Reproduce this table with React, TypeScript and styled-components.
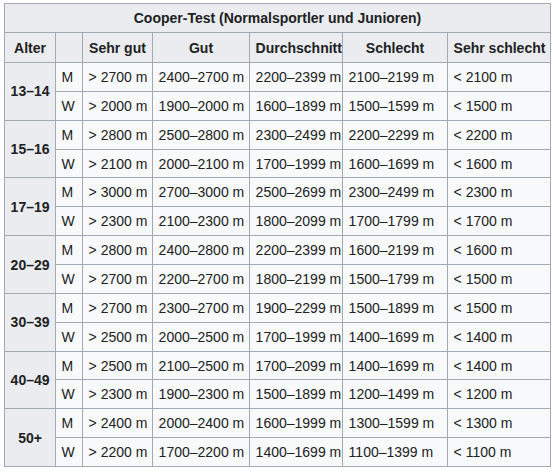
import styled, { createGlobalStyle } from 'styled-components'

type Group = {
	age: string
	rows: { sex: string; values: string[] }[]
}

const HEADERS = ['Sehr gut', 'Gut', 'Durchschnitt', 'Schlecht', 'Sehr schlecht']
const COL_WIDTHS = [51, 27, 70, 97, 93, 105, 103]

const GROUPS: Group[] = [
	{
		age: '13–14',
		rows: [
			{ sex: 'M', values: ['> 2700 m', '2400–2700 m', '2200–2399 m', '2100–2199 m', '< 2100 m'] },
			{ sex: 'W', values: ['> 2000 m', '1900–2000 m', '1600–1899 m', '1500–1599 m', '< 1500 m'] },
		],
	},
	{
		age: '15–16',
		rows: [
			{ sex: 'M', values: ['> 2800 m', '2500–2800 m', '2300–2499 m', '2200–2299 m', '< 2200 m'] },
			{ sex: 'W', values: ['> 2100 m', '2000–2100 m', '1700–1999 m', '1600–1699 m', '< 1600 m'] },
		],
	},
	{
		age: '17–19',
		rows: [
			{ sex: 'M', values: ['> 3000 m', '2700–3000 m', '2500–2699 m', '2300–2499 m', '< 2300 m'] },
			{ sex: 'W', values: ['> 2300 m', '2100–2300 m', '1800–2099 m', '1700–1799 m', '< 1700 m'] },
		],
	},
	{
		age: '20–29',
		rows: [
			{ sex: 'M', values: ['> 2800 m', '2400–2800 m', '2200–2399 m', '1600–2199 m', '< 1600 m'] },
			{ sex: 'W', values: ['> 2700 m', '2200–2700 m', '1800–2199 m', '1500–1799 m', '< 1500 m'] },
		],
	},
	{
		age: '30–39',
		rows: [
			{ sex: 'M', values: ['> 2700 m', '2300–2700 m', '1900–2299 m', '1500–1899 m', '< 1500 m'] },
			{ sex: 'W', values: ['> 2500 m', '2000–2500 m', '1700–1999 m', '1400–1699 m', '< 1400 m'] },
		],
	},
	{
		age: '40–49',
		rows: [
			{ sex: 'M', values: ['> 2500 m', '2100–2500 m', '1700–2099 m', '1400–1699 m', '< 1400 m'] },
			{ sex: 'W', values: ['> 2300 m', '1900–2300 m', '1500–1899 m', '1200–1499 m', '< 1200 m'] },
		],
	},
	{
		age: '50+',
		rows: [
			{ sex: 'M', values: ['> 2400 m', '2000–2400 m', '1600–1999 m', '1300–1599 m', '< 1300 m'] },
			{ sex: 'W', values: ['> 2200 m', '1700–2200 m', '1400–1699 m', '1100–1399 m', '< 1100 m'] },
		],
	},
]

const GlobalStyle = createGlobalStyle`
	body {
		margin: 0;
		background: #ffffff;
		font-family: 'Liberation Sans', Arial, sans-serif;
		color: #202122;
	}
`

const App = () => (
	<Page>
		<GlobalStyle />
		<WikiTable>
			<colgroup>
				{COL_WIDTHS.map((w, i) => (
					<Col key={i} $width={w} />
				))}
			</colgroup>
			<thead>
				<tr>
					<Caption colSpan={7}>Cooper-Test (Normalsportler und Junioren)</Caption>
				</tr>
				<tr>
					<HeadCell>Alter</HeadCell>
					<HeadCell />
					{HEADERS.map((h) => (
						<HeadCell key={h}>{h}</HeadCell>
					))}
				</tr>
			</thead>
			<tbody>
				{GROUPS.map((group) =>
					group.rows.map((row, i) => (
						<tr key={group.age + row.sex}>
							{i === 0 && <AgeCell rowSpan={group.rows.length}>{group.age}</AgeCell>}
							<Cell>{row.sex}</Cell>
							{row.values.map((v, j) => (
								<Cell key={j}>{v}</Cell>
							))}
						</tr>
					))
				)}
			</tbody>
		</WikiTable>
	</Page>
)

const Page = styled.div`
	padding: 3px 4px;
`

const WikiTable = styled.table`
	border-collapse: collapse;
	border: 1px solid #a2a9b1;
	background: #f8f9fa;
	font-size: 14px;
	table-layout: fixed;
	width: 546px;
`

const Col = styled.col<{ $width: number }>`
	width: ${(props) => props.$width}px;
`

const Cell = styled.td`
	border: 1px solid #a2a9b1;
	padding: 0 5.6px;
	height: 28.86px;
	line-height: 22px;
	white-space: nowrap;
	box-sizing: border-box;
`

const HeadCell = styled.th`
	border: 1px solid #a2a9b1;
	background: #eaecf0;
	padding: 0 5.6px;
	height: 30px;
	line-height: 22px;
	font-weight: bold;
	text-align: center;
	white-space: nowrap;
	box-sizing: border-box;
`

const Caption = styled(HeadCell)`
	height: 29px;
`

const AgeCell = styled(HeadCell)`
	vertical-align: middle;
`

export default App
